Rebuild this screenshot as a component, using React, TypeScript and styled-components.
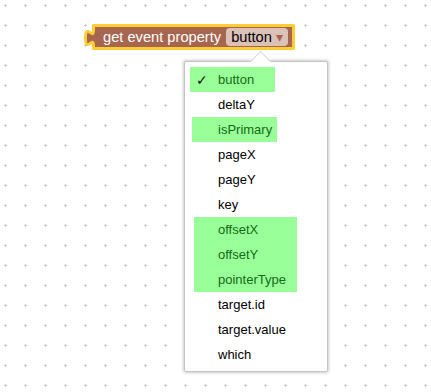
import React from 'react';
import styled, { createGlobalStyle } from 'styled-components';

type Item = {
  label: string;
  checked?: boolean;
  highlight?: boolean;
  inset: number;
  width?: number;
};

const items: Item[] = [
  { label: 'button', checked: true, highlight: true, inset: 5, width: 85 },
  { label: 'deltaY', inset: 5 },
  { label: 'isPrimary', highlight: true, inset: 7, width: 85 },
  { label: 'pageX', inset: 5 },
  { label: 'pageY', inset: 5 },
  { label: 'key', inset: 5 },
  { label: 'offsetX', highlight: true, inset: 9, width: 103 },
  { label: 'offsetY', highlight: true, inset: 9, width: 103 },
  { label: 'pointerType', highlight: true, inset: 9, width: 103 },
  { label: 'target.id', inset: 5 },
  { label: 'target.value', inset: 5 },
  { label: 'which', inset: 5 },
];

const TEXT_LEFT = 33;

const GlobalStyle = createGlobalStyle`
  html, body {
    margin: 0;
    padding: 0;
    background: #fff;
  }
  body {
    font-family: 'Liberation Sans', Arial, sans-serif;
  }
`;

export default function App() {
  return (
    <>
      <GlobalStyle />
      <Workspace>
        <Grid width='431' height='392'>
          <defs>
            <pattern
              id='grid'
              width='20'
              height='20'
              patternUnits='userSpaceOnUse'
            >
              <line x1='4' y1='5.5' x2='7' y2='5.5' stroke='#ccc' />
              <line x1='5.5' y1='4' x2='5.5' y2='7' stroke='#ccc' />
            </pattern>
          </defs>
          <rect width='431' height='392' fill='url(#grid)' />
        </Grid>

        <Block>
          <BlockShape width='212' height='26'>
            <path
              d='M 9.5 1.5 H 209.5 V 24.5 H 9.5 V 21.5 c 0,-10 -8,8 -8,-7.5 s 8,2.5 8,-7.5 Z'
              fill='#a6654f'
              stroke='#fc3'
              strokeWidth='3'
              strokeLinejoin='round'
            />
          </BlockShape>
          <BlockContent>
            <BlockLabel>get event property</BlockLabel>
            <Field>
              <FieldText>button</FieldText>
              <FieldArrow>▾</FieldArrow>
            </Field>
          </BlockContent>
        </Block>

        <Menu>
          <MenuArrow />
          <MenuList>
            {items.map((v) => (
              <MenuItem
                key={v.label}
                $highlight={!!v.highlight}
                $inset={v.inset}
                $width={v.width}
              >
                <CheckSlot $width={TEXT_LEFT - v.inset}>
                  {v.checked ? '✓' : ''}
                </CheckSlot>
                <ItemText $highlight={!!v.highlight}>{v.label}</ItemText>
              </MenuItem>
            ))}
          </MenuList>
        </Menu>
      </Workspace>
    </>
  );
}

const Workspace = styled.div`
  position: relative;
  width: 431px;
  height: 392px;
  overflow: hidden;
  background: #fff;
`;

const Grid = styled.svg`
  position: absolute;
  inset: 0;
  display: block;
`;

const Block = styled.div`
  position: absolute;
  left: 84px;
  top: 24px;
  width: 212px;
  height: 26px;
`;

const BlockShape = styled.svg`
  position: absolute;
  inset: 0;
  display: block;
`;

const BlockContent = styled.div`
  position: relative;
  display: flex;
  align-items: center;
  height: 100%;
  padding-left: 19px;
  gap: 5px;
`;

const BlockLabel = styled.span`
  color: #fff;
  font-size: 14.67px;
  line-height: 18px;
  white-space: nowrap;
`;

const Field = styled.span`
  display: flex;
  align-items: center;
  height: 18px;
  padding: 0 5px 0 5px;
  gap: 4px;
  border-radius: 4px;
  background: rgba(255, 255, 255, 0.6);
`;

const FieldText = styled.span`
  color: #000;
  font-size: 14.67px;
  line-height: 18px;
`;

const FieldArrow = styled.span`
  color: #a6654f;
  font-family: 'DejaVu Sans', sans-serif;
  font-size: 14px;
  line-height: 18px;
`;

const Menu = styled.div`
  position: absolute;
  left: 184px;
  top: 61px;
  width: 142px;
  height: 309px;
  background: #fff;
  border: 1px solid #c4c4c4;
  border-radius: 2px;
  box-shadow: 0 0 3px 1px rgba(0, 0, 0, 0.2);
`;

const MenuArrow = styled.div`
  position: absolute;
  left: 68px;
  top: -8px;
  width: 14px;
  height: 14px;
  background: #fff;
  border-top: 1px solid #d4d4d4;
  border-left: 1px solid #d4d4d4;
  transform: rotate(45deg);
`;

const MenuList = styled.div`
  position: relative;
  display: flex;
  flex-direction: column;
  align-items: flex-start;
  padding-top: 5px;
`;

const MenuItem = styled.div<{
  $highlight: boolean;
  $inset: number;
  $width?: number;
}>`
  display: flex;
  align-items: center;
  height: 25px;
  margin-left: ${(p) => p.$inset}px;
  width: ${(p) => (p.$width ? `${p.$width}px` : 'auto')};
  background: ${(p) => (p.$highlight ? '#9f9' : 'transparent')};
`;

const CheckSlot = styled.span<{ $width: number }>`
  width: ${(p) => p.$width}px;
  padding-left: 6px;
  box-sizing: border-box;
  font-family: 'DejaVu Sans', sans-serif;
  font-size: 14px;
  color: #111;
`;

const ItemText = styled.span<{ $highlight: boolean }>`
  font-size: 13px;
  color: ${(p) => (p.$highlight ? '#146a14' : '#000')};
  white-space: nowrap;
`;
